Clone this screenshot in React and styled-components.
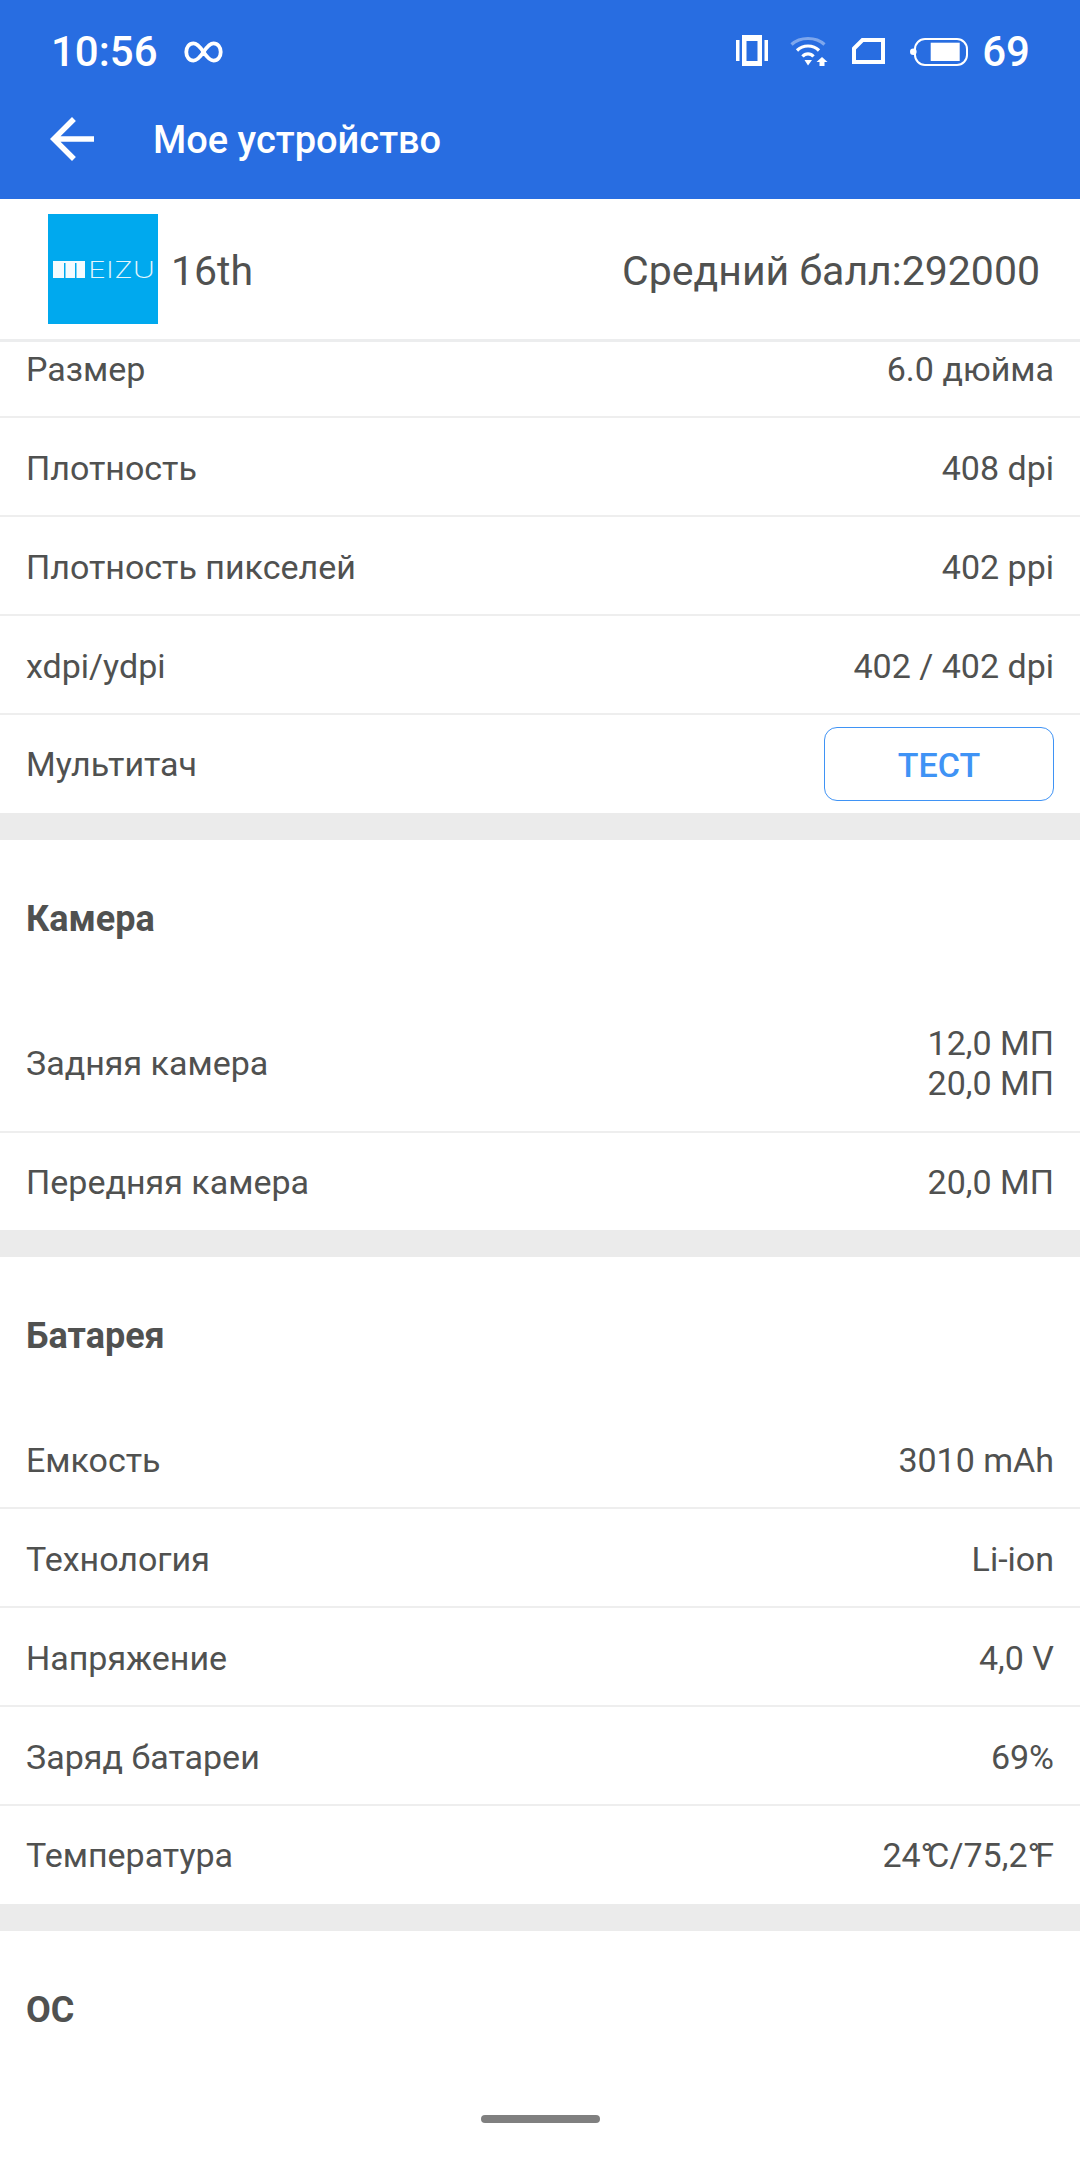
import React from 'react'
import styled, {createGlobalStyle} from 'styled-components'

const Global = createGlobalStyle`
  html, body { margin: 0; padding: 0; background: #fff; }
  body { font-family: Roboto, "Noto Sans", sans-serif; }
`

const Page = styled.div`
  position: relative;
  width: 1080px;
  height: 2160px;
  overflow: hidden;
  background: #fff;
  color: #505150;
  display: flex;
  flex-direction: column;
`

const AppBar = styled.header`
  height: 199px;
  flex: none;
  background: #286de1;
  color: #fff;
  display: flex;
  flex-direction: column;
`

const StatusBar = styled.div`
  height: 100px;
  box-sizing: border-box;
  padding: 4px 50px 0 51px;
  display: flex;
  align-items: center;
  justify-content: space-between;
`

const StatusGroup = styled.div`
  display: flex;
  align-items: center;
`

const Clock = styled.span`
  font-size: 42px;
  font-weight: 500;
  line-height: 96px;
  margin-left: ${p => p.$left || 0}px;
`

const StatusIcon = styled.svg`
  display: block;
  margin-top: -3px;
  margin-left: ${p => p.$left || 0}px;
`

const LoopIcon = styled.svg`
  display: block;
  margin-left: 25px;
`

const ToolBar = styled.div`
  height: 77px;
  padding-left: 39px;
  display: flex;
  align-items: center;
`

const Title = styled.h1`
  margin: 0 0 0 48px;
  padding-top: 2px;
  font-size: 38px;
  font-weight: 500;
`

const DeviceHeader = styled.div`
  height: 143px;
  flex: none;
  box-sizing: border-box;
  border-bottom: 3px solid #ecedee;
  padding: 15px 40px 0 48px;
  display: flex;
  align-items: flex-start;
  justify-content: space-between;
`

const DeviceName = styled.div`
  display: flex;
  align-items: center;
  gap: 13px;
  font-size: 41px;
`

const ModelText = styled.span`
  padding-top: 4px;
`

const Score = styled.div`
  font-size: 41px;
  line-height: 110px;
  margin-top: 2px;
`

const Scroller = styled.div`
  flex: 1;
  overflow: hidden;
`

const List = styled.div`
  margin-top: -23px;
`

const Row = styled.div`
  height: ${p => p.$height || 99}px;
  box-sizing: border-box;
  padding: 0 26px ${p => (p.$last ? 2 : p.$tall ? 6 : 0)}px 26px;
  display: flex;
  align-items: center;
  justify-content: space-between;
  font-size: 34px;
  border-bottom: ${p => (p.$last ? 'none' : '2px solid #eeeeee')};
`

const Label = styled.span`
  padding-top: 2px;
`

const Value = styled.div`
  padding-top: 2px;
  text-align: right;
  line-height: 40px;
`

const Deg = styled.span`
  letter-spacing: ${p => p.$squeeze}px;
`

const Gap = styled.div`
  height: 27px;
  background: #ebebeb;
`

const SectionTitle = styled.h2`
  margin: 0;
  height: ${p => p.$height || 158}px;
  box-sizing: border-box;
  padding: 59px 26px 0;
  font-size: 36px;
  line-height: 40px;
  font-weight: 700;
`

const TestButton = styled.button`
  width: 230px;
  height: 74px;
  margin-top: 2px;
  box-sizing: border-box;
  padding: 2px 0 0;
  border: 1.5px solid #3f93f5;
  border-radius: 13px;
  background: #fff;
  color: #3f93f5;
  font-family: inherit;
  font-size: 34px;
  font-weight: 500;
`

const HomeIndicator = styled.div`
  position: absolute;
  left: 481px;
  top: 2115px;
  width: 119px;
  height: 8px;
  border-radius: 4px;
  background: #808080;
`

const MeizuLogo = () => (
  <svg width="110" height="110" viewBox="0 0 110 110" style={{display: 'block'}}>
    <rect width="110" height="110" fill="#00a9ee" />
    <rect x="5" y="47" width="32" height="17" fill="#f4fbfe" />
    <rect x="16" y="49" width="1.5" height="15" fill="#00a9ee" />
    <rect x="27" y="49" width="1.5" height="15" fill="#00a9ee" />
    <text x="40" y="64" fontFamily="Inter" fontSize="23" fontWeight="200" fill="#e4f6fd" textLength="67" lengthAdjust="spacingAndGlyphs">EIZU</text>
  </svg>
)

const BackArrow = () => (
  <svg width="66" height="66" viewBox="0 0 24 24" fill="#fff" style={{display: 'block'}}>
    <path d="M20 11H7.83l5.59-5.59L12 4l-8 8 8 8 1.41-1.41L7.83 13H20v-2z" />
  </svg>
)

const StatusIcons = () => (
  <StatusGroup>
    <StatusIcon width="32" height="31" viewBox="0 0 32 31" fill="#fff">
      <rect x="0" y="5" width="3.5" height="21" />
      <rect x="28.5" y="5" width="3.5" height="21" />
      <path fillRule="evenodd" d="M6 0h20v31H6z M10.5 6v20h11V6z" />
    </StatusIcon>
    <StatusIcon $left={22} width="38" height="31" viewBox="0 0 38 31" fill="none" stroke="#fff" strokeWidth="3.2">
      <path d="M1.5 9.5 C10 1.5 26 1.5 34.5 9.5" opacity="0.4" />
      <path d="M7 15.5 C13 9.5 23 9.5 29 15.5" />
      <path d="M12.5 21.5 C15.5 18 20.5 18 23.5 21.5" />
      <path d="M14.5 25 H22 L18 30.5 Z" fill="#fff" stroke="none" />
      <path d="M32 22 L37.5 27 H34.5 V31 H29.5 V27 H26.5 Z" fill="#fff" stroke="none" />
    </StatusIcon>
    <StatusIcon $left={24} width="33" height="26" viewBox="0 0 33 26" fill="none" stroke="#fff" strokeWidth="4">
      <path d="M2 10.5 L10.5 2 H31 V24 H2 Z" />
    </StatusIcon>
    <StatusIcon $left={25} width="58" height="31" viewBox="0 0 58 31" fill="none">
      <circle cx="3.3" cy="16.7" r="3.3" fill="#fff" />
      <rect x="5" y="4" width="52" height="26" rx="10" stroke="#fff" strokeWidth="2" />
      <rect x="20.7" y="7.7" width="29" height="18.3" fill="#fff" />
    </StatusIcon>
    <Clock $left={14}>69</Clock>
  </StatusGroup>
)

const details = [
  ['Размер', '6.0 дюйма'],
  ['Плотность', '408 dpi'],
  ['Плотность пикселей', '402 ppi'],
  ['xdpi/ydpi', '402 / 402 dpi'],
]

const battery = [
  ['Емкость', '3010 mAh'],
  ['Технология', 'Li-ion'],
  ['Напряжение', '4,0 V'],
  ['Заряд батареи', '69%'],
]

const App = () => {
  return (
    <Page>
      <Global />
      <AppBar>
        <StatusBar>
          <StatusGroup>
            <Clock>10:56</Clock>
            <LoopIcon width="41" height="22" viewBox="0 0 40 23" fill="none" stroke="#fff" strokeWidth="4">
              <path d="M20 11.5 C16 5.5 13 2.5 9.5 2.5 C5 2.5 2 6.5 2 11.5 C2 16.5 5 20.5 9.5 20.5 C13 20.5 16 17.5 20 11.5 C24 5.5 27 2.5 30.5 2.5 C35 2.5 38 6.5 38 11.5 C38 16.5 35 20.5 30.5 20.5 C27 20.5 24 17.5 20 11.5 Z" />
            </LoopIcon>
          </StatusGroup>
          <StatusIcons />
        </StatusBar>
        <ToolBar>
          <BackArrow />
          <Title>Мое устройство</Title>
        </ToolBar>
      </AppBar>
      <DeviceHeader>
        <DeviceName>
          <MeizuLogo />
          <ModelText>16th</ModelText>
        </DeviceName>
        <Score>Средний балл:292000</Score>
      </DeviceHeader>
      <Scroller>
        <List>
          {details.map(([label, value]) => (
            <Row key={label}>
              <Label>{label}</Label>
              <Value>{value}</Value>
            </Row>
          ))}
          <Row $last $height={98}>
            <Label>Мультитач</Label>
            <TestButton>ТЕСТ</TestButton>
          </Row>
          <Gap />
          <SectionTitle>Камера</SectionTitle>
          <Row $height={135} $tall>
            <Label>Задняя камера</Label>
            <Value>12,0 МП<br />20,0 МП</Value>
          </Row>
          <Row $last $height={97}>
            <Label>Передняя камера</Label>
            <Value>20,0 МП</Value>
          </Row>
          <Gap />
          <SectionTitle $height={153}>Батарея</SectionTitle>
          {battery.map(([label, value]) => (
            <Row key={label}>
              <Label>{label}</Label>
              <Value>{value}</Value>
            </Row>
          ))}
          <Row $last $height={98}>
            <Label>Температура</Label>
            <Value>24<Deg $squeeze={-6}>°</Deg>C/75,2<Deg $squeeze={-5}>°</Deg>F</Value>
          </Row>
          <Gap />
          <SectionTitle>ОС</SectionTitle>
        </List>
      </Scroller>
      <HomeIndicator />
    </Page>
  )
}

export default App
